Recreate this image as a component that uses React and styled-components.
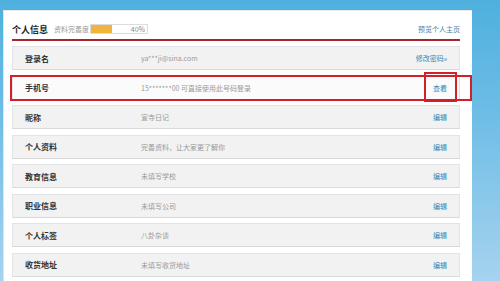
import React from 'react';
import styled, { createGlobalStyle } from 'styled-components';

const GlobalStyle = createGlobalStyle`
  html, body {
    margin: 0;
    padding: 0;
    width: 500px;
    height: 281px;
    overflow: hidden;
  }
  body {
    font-family: 'Noto Sans CJK SC', 'Noto Sans', sans-serif;
  }
`;

const Screen = styled.div`
  width: 500px;
  height: 281px;
  box-sizing: border-box;
  padding: 10px 0 0 3px;
  display: flex;
  background: linear-gradient(180deg, #4fb0de 0%, #6dbde6 40%, #a6d3ef 100%);
`;

const Panel = styled.div`
  width: 469px;
  height: 100%;
  box-sizing: border-box;
  background: #fff;
  border-left: 1px solid #e4e4e4;
  border-top: 1px solid #e8e8e8;
  padding: 0 12px 0 8px;
  display: flex;
  flex-direction: column;
`;

const Header = styled.div`
  height: 30px;
  box-sizing: border-box;
  padding-top: 8px;
  display: flex;
  align-items: center;
  border-bottom: 2px solid #a82430;
`;

const Title = styled.div`
  font-size: 9px;
  font-weight: bold;
  color: #222;
  margin-right: 6px;
`;

const Hint = styled.span`
  font-size: 7px;
  color: #999;
  margin-right: 1px;
`;

const Progress = styled.div`
  width: 58px;
  height: 10px;
  box-sizing: border-box;
  border: 1px solid #dcdcdc;
  background: #fff;
  display: flex;
  align-items: center;
`;

const Fill = styled.div`
  height: 100%;
  background: #f0b43c;
`;

const Percent = styled.span`
  margin-left: auto;
  margin-right: 2px;
  font-size: 7px;
  color: #888;
`;

const HeaderLink = styled.a`
  margin-left: auto;
  font-size: 7px;
  color: #4a7ea6;
  text-decoration: none;
`;

const List = styled.div`
  display: flex;
  flex-direction: column;
  gap: 5.5px;
  margin-top: 5px;
`;

const Row = styled.div`
  position: relative;
  height: 24px;
  box-sizing: border-box;
  display: flex;
  align-items: center;
  padding: 0 12px;
  background: ${(p) => (p.$marked ? '#fbfbfb' : '#f2f2f2')};
  border: 1px solid #e3e3e3;
  border-bottom-color: #dadada;

  ${(p) =>
    p.$marked &&
    `
    &::after {
      content: '';
      position: absolute;
      left: -3px;
      right: -13px;
      top: -2px;
      bottom: -2px;
      border: 2px solid #d0212b;
      pointer-events: none;
    }
  `}
`;

const Label = styled.div`
  width: 116px;
  flex-shrink: 0;
  font-size: 8px;
  font-weight: bold;
  color: #333;
`;

const Value = styled.div`
  font-size: 7px;
  color: #9a9a9a;
`;

const Action = styled.a`
  position: relative;
  margin-left: auto;
  font-size: 7px;
  color: #2f86b8;
  text-decoration: none;

  ${(p) =>
    p.$marked &&
    `
    &::after {
      content: '';
      position: absolute;
      left: -9px;
      right: -10px;
      top: -11px;
      bottom: -9px;
      border: 2px solid #d0212b;
    }
  `}
`;

const rows = [
  { label: '登录名', value: 'ya***ji@sina.com', action: '修改密码»' },
  { label: '手机号', value: '15*******00 可直接使用此号码登录', action: '查看', marked: true },
  { label: '昵称', value: '宣寺日记', action: '编辑' },
  { label: '个人资料', value: '完善资料，让大家更了解你', action: '编辑' },
  { label: '教育信息', value: '未填写学校', action: '编辑' },
  { label: '职业信息', value: '未填写公司', action: '编辑' },
  { label: '个人标签', value: '八卦杂谈', action: '编辑' },
  { label: '收货地址', value: '未填写收货地址', action: '编辑' },
];

const App = () => {
  const complete = 40;

  return (
    <>
      <GlobalStyle />
      <Screen>
        <Panel>
          <Header>
            <Title>个人信息</Title>
            <Hint>资料完善度</Hint>
            <Progress>
              <Fill style={{ width: `${complete * 0.95}%` }} />
              <Percent>{complete}%</Percent>
            </Progress>
            <HeaderLink href="#">预览个人主页</HeaderLink>
          </Header>
          <List>
            {rows.map((row) => (
              <Row key={row.label} $marked={row.marked}>
                <Label>{row.label}</Label>
                <Value>{row.value}</Value>
                <Action href="#" $marked={row.marked}>
                  {row.action}
                </Action>
              </Row>
            ))}
          </List>
        </Panel>
      </Screen>
    </>
  );
};

export default App;
